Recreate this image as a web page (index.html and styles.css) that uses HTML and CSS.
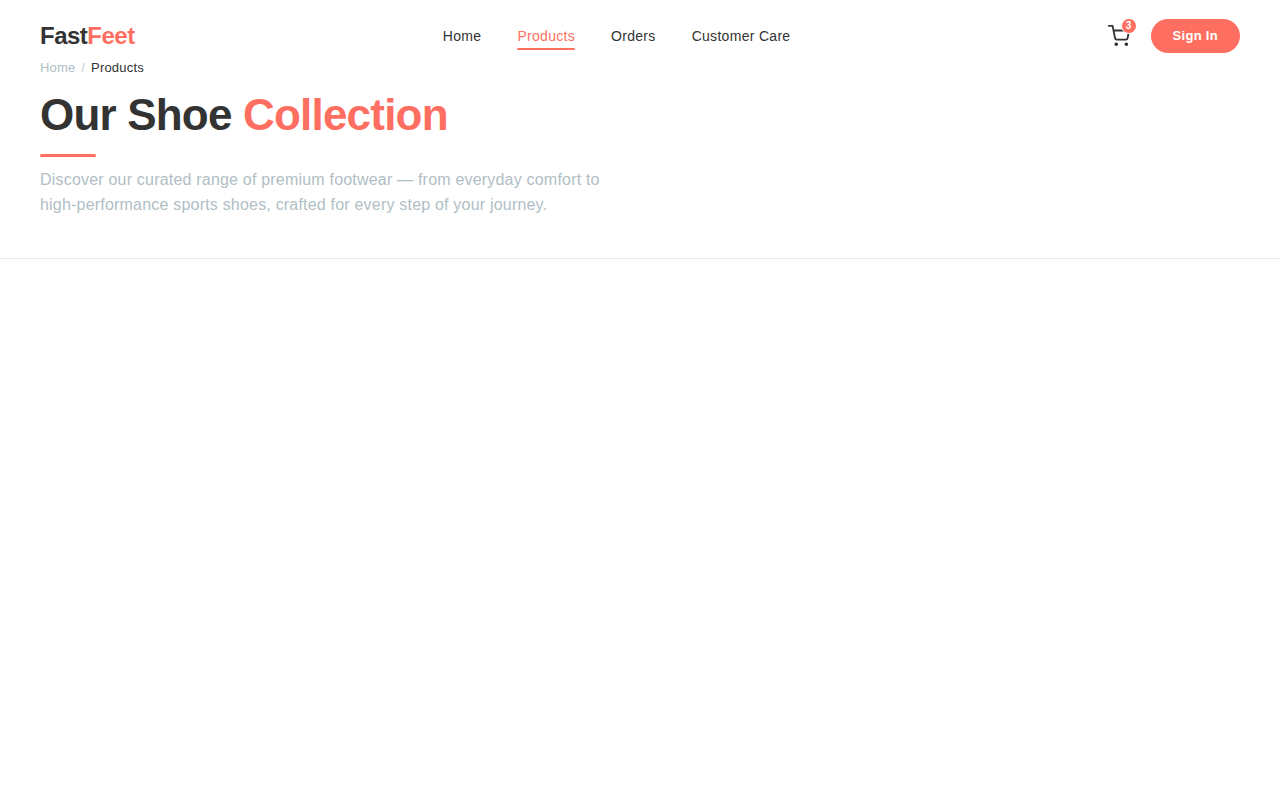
FILE: index.html
```html
<!DOCTYPE html>
<html lang="en">
<head>
<meta charset="utf-8">
<meta name="viewport" content="width=device-width, initial-scale=1">
<title>FastFeet – Products</title>
<link rel="stylesheet" href="styles.css">
</head>
<body>
<header class="navbar">
  <a class="logo" href="#">Fast<span class="accent">Feet</span></a>
  <nav class="nav-links" aria-label="Main">
    <a class="nav-link" href="#">Home</a>
    <a class="nav-link active" href="#" aria-current="page">Products</a>
    <a class="nav-link" href="#">Orders</a>
    <a class="nav-link" href="#">Customer Care</a>
  </nav>
  <div class="nav-actions">
    <button class="cart" type="button" aria-label="Cart">
      <svg width="22" height="22" viewBox="0 0 24 24" fill="none" stroke="currentColor" stroke-width="2" stroke-linecap="round" stroke-linejoin="round" aria-hidden="true">
        <circle cx="9" cy="21" r="1"/>
        <circle cx="20" cy="21" r="1"/>
        <path d="M1 1h4l2.68 13.39a2 2 0 0 0 2 1.61h9.72a2 2 0 0 0 2-1.61L23 6H6"/>
      </svg>
      <span class="badge">3</span>
    </button>
    <button class="sign-in" type="button">Sign In</button>
  </div>
</header>
<main>
  <section class="page-header">
    <nav class="breadcrumb" aria-label="Breadcrumb">
      <a class="crumb" href="#">Home</a>
      <span class="separator">/</span>
      <span class="current">Products</span>
    </nav>
    <h1 class="title">Our Shoe <span class="accent">Collection</span></h1>
    <div class="underline"></div>
    <p class="lead">Discover our curated range of premium footwear — from everyday comfort to high-performance sports shoes, crafted for every step of your journey.</p>
  </section>
</main>
</body>
</html>
```
FILE: styles.css
```css
* { box-sizing: border-box; margin: 0; padding: 0; }
body {
  background: #fff;
  color: #333;
  font-family: "Liberation Sans", Arial, sans-serif;
}
a { color: inherit; text-decoration: none; }
button { border: 0; font-family: inherit; cursor: pointer; }
.accent { color: #ff6f61; }
.navbar {
  display: flex;
  align-items: center;
  justify-content: space-between;
  padding: 19px 40px 7px;
}
.logo { font-size: 24px; font-weight: 700; letter-spacing: -0.5px; }
.nav-links { display: flex; gap: 36px; }
.nav-link {
  padding-top: 6px;
  font-size: 14px;
  line-height: 16px;
  letter-spacing: 0.3px;
}
.nav-link::after {
  content: "";
  display: block;
  height: 2px;
  margin-top: 4px;
  border-radius: 2px;
}
.nav-link.active { color: #ff6f61; }
.nav-link.active::after { background: #ff6f61; }
.nav-actions { display: flex; align-items: center; gap: 12px; }
.cart { position: relative; display: flex; padding: 0 9px; background: none; color: #333; }
.badge {
  position: absolute;
  top: -7px;
  right: 2px;
  width: 16px;
  height: 16px;
  border: 1px solid #fff;
  border-radius: 50%;
  background: #ff6f61;
  color: #fff;
  font-size: 10px;
  font-weight: 700;
  line-height: 14px;
  text-align: center;
}
.sign-in {
  padding: 9px 22px;
  border-radius: 50px;
  background: #ff6f61;
  color: #fff;
  font-size: 13px;
  font-weight: 700;
  line-height: 16px;
  letter-spacing: 0.3px;
}
.page-header { padding: 0 40px 41px; border-bottom: 1px solid #e8e8e8; }
.breadcrumb {
  display: flex;
  gap: 6px;
  margin-bottom: 14px;
  font-size: 13px;
  line-height: 16px;
  letter-spacing: 0.2px;
}
.crumb, .separator, .lead { color: #b0bec5; }
.separator { font-size: 12px; opacity: 0.8; }
.title {
  margin-bottom: 14px;
  font-size: 44px;
  line-height: 50px;
  letter-spacing: -0.8px;
}
.underline { width: 56px; height: 3px; margin-bottom: 10px; border-radius: 2px; background: #ff6f61; }
.lead { max-width: 560px; font-size: 16px; line-height: 25px; letter-spacing: 0.2px; }
```
